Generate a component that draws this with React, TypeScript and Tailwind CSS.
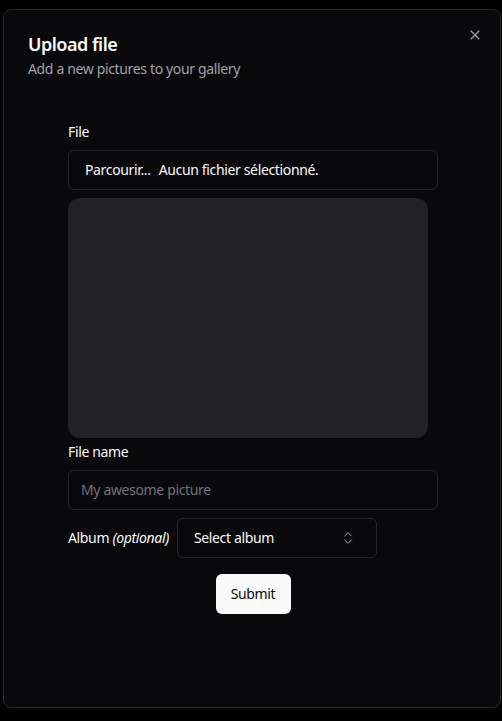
import { X, ChevronsUpDown } from 'lucide-react';

export default function App() {
  return (
    <div
      className="min-h-[721px] w-[502px] bg-black pt-[9px] pl-[3px] pr-px pb-[13px] tracking-[-0.35px]"
      style={{ fontFamily: '"Noto Sans", "Open Sans", sans-serif' }}
    >
      <div className="relative h-[699px] w-[498px] rounded-lg border border-[#27272a] bg-[#09090b] px-6 pb-6 pt-[25px] text-[#fafafa]">
        <button className="absolute right-[17px] top-[17px] text-[#a1a1aa]">
          <X className="h-4 w-4" strokeWidth={1.75} />
        </button>

        {/* ヘッダー */}
        <div className="flex flex-col gap-[6px]">
          <h2 className="text-lg font-semibold leading-none tracking-[-0.5px]">Upload file</h2>
          <p className="text-sm text-[#a1a1aa]">Add a new pictures to your gallery</p>
        </div>

        {/* フォーム */}
        <form className="mt-[43px] ml-10 flex w-[370px] flex-col">
          <label className="text-sm leading-5">File</label>
          <div className="mt-2 flex h-10 items-center rounded-md border border-[#27272a] px-[16px] text-sm">
            <span className="mr-[8px]">Parcourir...</span>
            <span>Aucun fichier sélectionné.</span>
          </div>
          <div className="mt-2 h-[240px] w-[360px] rounded-xl bg-[#222224]" />

          <label className="mt-1 text-sm leading-5">File name</label>
          <div className="mt-2 flex h-10 items-center rounded-md border border-[#27272a] px-3 text-sm text-[#71717a]">
            My awesome picture
          </div>

          <div className="mt-2 flex items-center gap-2">
            <span className="text-sm">
              Album <i>(optional)</i>
            </span>
            <div className="flex h-10 w-[200px] items-center justify-between rounded-md border border-[#27272a] pl-4 pr-[20px] text-sm">
              <span>Select album</span>
              <ChevronsUpDown className="h-4 w-4 text-[#a1a1aa]" strokeWidth={1.5} />
            </div>
          </div>

          <div className="mt-4 flex justify-center">
            <button
              type="button"
              className="h-10 w-[75px] rounded-md bg-[#fafafa] text-sm text-[#09090b]"
            >
              Submit
            </button>
          </div>
        </form>
      </div>
    </div>
  );
}
